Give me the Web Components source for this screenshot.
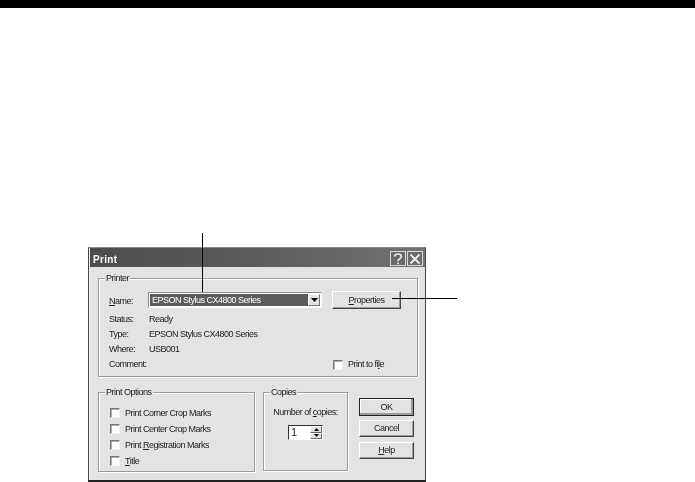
<!DOCTYPE html>
<html>
<head>
<meta charset="utf-8">
<title>Print</title>
<style>
    html, body { margin: 0; background: #fff; }
    body { font-family: "Liberation Sans", Arial, sans-serif; }
</style>
</head>
<body>
<manual-page>
    <print-dialog></print-dialog>
</manual-page>

<script>
class ManualPage extends HTMLElement {
    constructor() {
        super();
        this.attachShadow({ mode: "open" });
        this.shadowRoot.innerHTML = `
            <style>
                :host {
                    display: block;
                    position: relative;
                    width: 695px;
                    height: 482px;
                    overflow: hidden;
                    background: #fff;
                }
                .bar { height: 8px; background: #000; }
                .content { padding: 239px 0 0 88px; }
                .leader { position: absolute; background: #000; }
                .leader.name { left: 202px; top: 233px; width: 1px; height: 59px; }
                .leader.properties { left: 392px; top: 298px; width: 65px; height: 1px; }
            </style>
            <div class="bar"></div>
            <div class="content"><slot></slot></div>
            <div class="leader name"></div>
            <div class="leader properties"></div>
        `;
    }
}

class GroupBox extends HTMLElement {
    constructor() {
        super();
        this.attachShadow({ mode: "open" });
        this.shadowRoot.innerHTML = `
            <style>
                :host {
                    display: block;
                    position: relative;
                    box-sizing: border-box;
                    border: 1px solid #9a9a9a;
                    box-shadow: inset 1px 1px 0 #fff, 1px 1px 0 #fff;
                }
                .legend {
                    position: absolute;
                    left: 6px;
                    top: -6px;
                    padding: 0 1px;
                    background: var(--face);
                    line-height: 11px;
                }
            </style>
            <span class="legend"></span>
            <slot></slot>
        `;
    }

    connectedCallback() {
        this.shadowRoot.querySelector(".legend").textContent = this.getAttribute("label") || "";
    }
}

class WinButton extends HTMLElement {
    constructor() {
        super();
        this.attachShadow({ mode: "open" });
        this.shadowRoot.innerHTML = `
            <style>
                :host {
                    display: flex;
                    align-items: center;
                    justify-content: center;
                    box-sizing: border-box;
                    background: var(--face);
                    border: 1px solid;
                    border-color: #fff #444 #444 #fff;
                    box-shadow: inset -1px -1px 0 #9a9a9a;
                }
                :host([default]) { outline: 1px solid #222; outline-offset: -1px; box-shadow: inset -2px -2px 0 #9a9a9a, inset 1px 1px 0 #fff; }
            </style>
            <slot></slot>
        `;
    }
}

class WinCheck extends HTMLElement {
    constructor() {
        super();
        this.attachShadow({ mode: "open" });
        this.shadowRoot.innerHTML = `
            <style>
                :host { display: flex; align-items: center; gap: 5px; height: 16px; }
                .box {
                    box-sizing: border-box;
                    width: 10px;
                    height: 10px;
                    background: #fff;
                    border: 1px solid;
                    border-color: #777 #f4f4f4 #f4f4f4 #777;
                    box-shadow: inset 1px 1px 0 #aaa;
                }
            </style>
            <span class="box"></span>
            <span><slot></slot></span>
        `;
    }
}

class PrinterCombo extends HTMLElement {
    constructor() {
        super();
        this.attachShadow({ mode: "open" });
        this.shadowRoot.innerHTML = `
            <style>
                :host {
                    display: flex;
                    box-sizing: border-box;
                    width: 174px;
                    height: 16px;
                    padding: 1px;
                    background: #fff;
                    border: 1px solid;
                    border-color: #8a8a8a #fff #fff #8a8a8a;
                }
                .value {
                    flex: 1;
                    display: flex;
                    align-items: center;
                    padding-left: 2px;
                    background: #5c5c5c;
                    color: #fff;
                }
                .arrow {
                    box-sizing: border-box;
                    width: 12px;
                    display: flex;
                    align-items: center;
                    justify-content: center;
                    background: var(--face);
                    border: 1px solid;
                    border-color: #fff #777 #777 #fff;
                }
                svg { display: block; }
            </style>
            <span class="value"><slot></slot></span>
            <span class="arrow"><svg width="7" height="4" viewBox="0 0 7 4"><path d="M0 0h7L3.500 4z" fill="#000"/></svg></span>
        `;
    }
}

class CopiesSpinner extends HTMLElement {
    constructor() {
        super();
        this.attachShadow({ mode: "open" });
        this.shadowRoot.innerHTML = `
            <style>
                :host {
                    display: flex;
                    box-sizing: border-box;
                    width: 35px;
                    height: 15px;
                    background: #fff;
                    border: 1px solid;
                    border-color: #333 #fff #fff #333;
                }
                .value { flex: 1; padding-left: 2px; line-height: 13px; font-size: 11px; letter-spacing: 0; }
                .arrows { width: 12px; display: flex; flex-direction: column; }
                .arrows span {
                    flex: 1;
                    box-sizing: border-box;
                    display: flex;
                    align-items: center;
                    justify-content: center;
                    background: var(--face);
                    border: 1px solid;
                    border-color: #fff #666 #666 #fff;
                }
                svg { display: block; }
            </style>
            <span class="value"><slot></slot></span>
            <span class="arrows">
                <span><svg width="5" height="3" viewBox="0 0 5 3"><path d="M0 3h5L2.500 0z"/></svg></span>
                <span><svg width="5" height="3" viewBox="0 0 5 3"><path d="M0 0h5L2.500 3z"/></svg></span>
            </span>
        `;
    }
}

class PrintDialog extends HTMLElement {
    constructor() {
        super();
        this.attachShadow({ mode: "open" });
        this.shadowRoot.innerHTML = `
            <style>
                :host {
                    --face: #e3e3e3;
                    display: block;
                    box-sizing: border-box;
                    width: 338px;
                    height: 235px;
                    background: var(--face);
                    border: 1px solid #444;
                    border-top-color: #8a8a8a;
                    border-bottom: 2px solid #222;
                    box-shadow: inset 1px 0 0 #f4f4f4;
                    font: 9px/11px "Liberation Sans", Arial, sans-serif;
                    letter-spacing: -0.5px;
                    color: #222;
                    filter: blur(0.3px);
                }
                u { text-decoration: underline; }
                .title {
                    box-sizing: border-box;
                    display: flex;
                    align-items: center;
                    justify-content: space-between;
                    height: 19px;
                    padding: 2px 2px 0 3px;
                    margin: 0 0 0 1px;
                    background: linear-gradient(to right, #4c4c4c, #606060 60%, #747474);
                    color: #fff;
                    font-weight: bold;
                    font-size: 10px;
                    letter-spacing: 0.3px;
                }
                .title-text { margin-top: 2px; }
                .title-buttons { display: flex; gap: 1px; }
                .title-button {
                    box-sizing: border-box;
                    width: 16px;
                    height: 15px;
                    display: flex;
                    align-items: center;
                    justify-content: center;
                    border: 1px solid #d8d8d8;
                    background: #6a6a6a;
                }
                .body { padding: 11px 8px 0 9px; }
                .printer { width: 320px; height: 99px; }
                .printer-rows {
                    display: grid;
                    grid-template-columns: 39px 174px 10px 69px;
                    align-items: center;
                    padding: 12px 0 0 10px;
                }
                .name-label { padding-top: 2px; }
                .info {
                    display: grid;
                    grid-template-columns: 40px 1fr auto;
                    grid-auto-rows: 15px;
                    align-items: center;
                    padding: 3px 33px 0 10px;
                }
                .properties { height: 18px; }
                .lower { display: flex; margin-top: 15px; }
                .options { width: 157px; height: 80px; }
                .option-list { display: flex; flex-direction: column; padding: 12px 0 0 11px; }
                .copies { width: 85px; height: 79px; margin-left: 8px; }
                .copies-inner { display: flex; flex-direction: column; align-items: center; gap: 7px; padding: 14px 0 0; }
                .actions { display: flex; flex-direction: column; gap: 5px; width: 55px; margin: 6px 0 0 11px; }
                .actions win-button { height: 17px; }
                .actions win-button[default] { height: 18px; margin-bottom: -1px; }
            </style>
            <div class="title">
                <span class="title-text">Print</span>
                <span class="title-buttons">
                    <span class="title-button"><svg width="10" height="12" viewBox="0 0 10 12" fill="none" stroke="#eee" stroke-width="1.6"><path d="M1.500 3.600C1.700 1.800 3.200 1 5 1c2 0 3.400 1 3.400 2.700C8.400 5.800 5 5.600 5 8.300"/><path d="M5 9.500v1.700"/></svg></span>
                    <span class="title-button"><svg width="12" height="12" viewBox="0 0 12 12" fill="none" stroke="#eee" stroke-width="1.800"><path d="M1.500 1.500l9 9M10.500 1.500l-9 9"/></svg></span>
                </span>
            </div>
            <div class="body">
                <group-box class="printer" label="Printer">
                    <div class="printer-rows">
                        <span class="name-label"><u>N</u>ame:</span>
                        <printer-combo>EPSON Stylus CX4800 Series</printer-combo>
                        <span></span>
                        <win-button class="properties"><span><u>P</u>roperties</span></win-button>
                    </div>
                    <div class="info">
                        <span>Status:</span><span>Ready</span><span></span>
                        <span>Type:</span><span>EPSON Stylus CX4800 Series</span><span></span>
                        <span>Where:</span><span>USB001</span><span></span>
                        <span>Comment:</span><span></span><win-check>Print to fi<u>l</u>e</win-check>
                    </div>
                </group-box>
                <div class="lower">
                    <group-box class="options" label="Print Options">
                        <div class="option-list">
                            <win-check>Print Corner Crop Marks</win-check>
                            <win-check>Print Center Crop Marks</win-check>
                            <win-check>Print <u>R</u>egistration Marks</win-check>
                            <win-check><u>T</u>itle</win-check>
                        </div>
                    </group-box>
                    <group-box class="copies" label="Copies">
                        <div class="copies-inner">
                            <span>Number of <u>c</u>opies:</span>
                            <copies-spinner>1</copies-spinner>
                        </div>
                    </group-box>
                    <div class="actions">
                        <win-button default>OK</win-button>
                        <win-button>Cancel</win-button>
                        <win-button><span><u>H</u>elp</span></win-button>
                    </div>
                </div>
            </div>
        `;
    }
}

customElements.define("manual-page", ManualPage);
customElements.define("group-box", GroupBox);
customElements.define("win-button", WinButton);
customElements.define("win-check", WinCheck);
customElements.define("printer-combo", PrinterCombo);
customElements.define("copies-spinner", CopiesSpinner);
customElements.define("print-dialog", PrintDialog);
</script>
</body>
</html>
